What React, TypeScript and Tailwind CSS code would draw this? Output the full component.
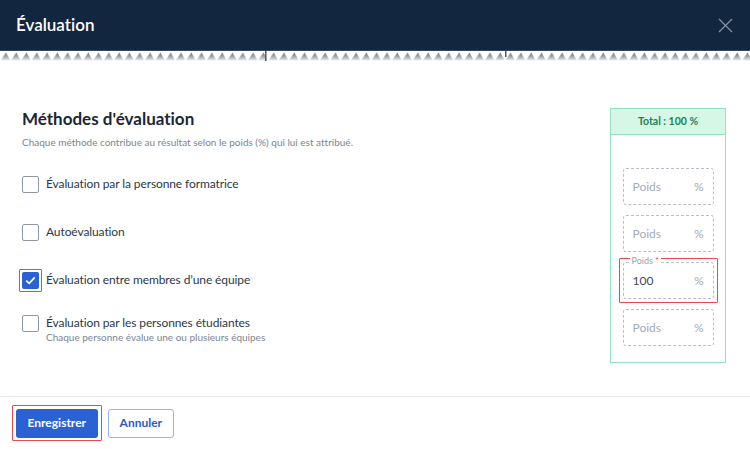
import React from "react"

const font = { fontFamily: "Lato, 'Open Sans', sans-serif" }

const methods = [
  { label: "Évaluation par la personne formatrice", checked: false },
  { label: "Autoévaluation", checked: false },
  { label: "Évaluation entre membres d’une équipe", checked: true },
  {
    label: "Évaluation par les personnes étudiantes",
    hint: "Chaque personne évalue une ou plusieurs équipes",
    checked: false,
  },
]

const TornEdge = () => (
  <svg width="750" height="10" className="block">
    <defs>
      <linearGradient id="tooth" x1="0" y1="0" x2="0" y2="1">
        <stop offset="0" stopColor="#6c7178" />
        <stop offset="0.55" stopColor="#a7abb0" />
        <stop offset="1" stopColor="#eceef0" />
      </linearGradient>
      <pattern id="teeth" width="10.3" height="10" patternUnits="userSpaceOnUse">
        <path d="M0.5 9.5 L6 1.5 L10.3 9.5 Z" fill="url(#tooth)" />
      </pattern>
    </defs>
    <rect width="750" height="10" fill="url(#teeth)" />
    <rect x="265" y="0" width="1.5" height="10" fill="#4b5b70" />
    <rect x="505" y="0" width="1.5" height="6" fill="#4b5b70" />
  </svg>
)

// red focus frame drawn around the focused control
const Focus = ({ on, children, className = "" }: { on?: boolean; children: React.ReactNode; className?: string }) => (
  <div
    className={
      "flex shrink-0 items-center justify-center rounded-[1px] border-[1.5px] " +
      (on ? "border-[#e5484d] " : "border-transparent ") +
      className
    }
  >
    {children}
  </div>
)

const Check = ({ checked }: { checked: boolean }) =>
  checked ? (
    <Focus on className="-m-[4px] p-[2px]">
      <span className="flex h-[17px] w-[17px] items-center justify-center rounded-[2px] bg-[#2a62d4]">
        <svg width="11" height="9" viewBox="0 0 11 9">
          <path d="M1.2 4.6 L4.2 7.4 L9.8 1.4" fill="none" stroke="#fff" strokeWidth="1.6" />
        </svg>
      </span>
    </Focus>
  ) : (
    <span className="block h-[17px] w-[17px] shrink-0 rounded-[2px] border border-[#8d97a5] bg-white" />
  )

const WeightInput = ({ value, active }: { value?: string; active?: boolean }) => (
  <Focus on={active} className="p-[3px]">
    <div className="relative flex h-[37px] w-[91px] items-center justify-between rounded-[3px] border border-dashed border-[#b7bfca] px-[9px] text-[12px]">
      {active && (
        <span className="absolute -top-[7px] left-[6px] bg-white px-[2px] text-[9px] leading-none text-[#98a1ae]">
          Poids <span className="text-[#e5484d]">*</span>
        </span>
      )}
      <span className={value ? "text-[#3b4a5e]" : "text-[#a3abb7]"}>{value ?? "Poids"}</span>
      <span className="text-[#a3abb7]">%</span>
    </div>
  </Focus>
)

export default function App() {
  return (
    <div
      style={font}
      className="flex h-[449px] w-[750px] flex-col overflow-hidden bg-white [font-variant-ligatures:none]"
    >
      <header className="flex h-[51px] items-center justify-between border-b border-[#33475f] bg-[#13263f] pl-[16px] pr-[17px]">
        <h1 className="text-[17px] font-semibold text-white">Évaluation</h1>
        <svg width="15" height="15" viewBox="0 0 15 15">
          <path d="M1 1 L14 14 M14 1 L1 14" stroke="#8593a6" strokeWidth="1.2" />
        </svg>
      </header>
      <TornEdge />

      <main className="flex flex-1 justify-between pl-[22px] pr-[24px] pt-[47px]">
        <section>
          <h2 className="text-[17px] font-bold leading-[22px] text-[#1b2636]">Méthodes d'évaluation</h2>
          <p className="mt-[5px] text-[10px] leading-[14px] text-[#7b8592]">
            Chaque méthode contribue au résultat selon le poids (%) qui lui est attribué.
          </p>
          <ul className="mt-[26px] flex flex-col">
            {methods.map((m, i) => (
              <li
                key={m.label}
                className={"flex items-start gap-[7px] " + (i === 0 ? "" : i === 3 ? "mt-[25px]" : "mt-[30px]")}
              >
                <div className="flex h-[18px] w-[17px] items-center justify-center">
                  <Check checked={m.checked} />
                </div>
                <div>
                  <div className="text-[12px] leading-[18px] tracking-[-0.1px] text-[#2c3848]">{m.label}</div>
                  {m.hint && <div className="text-[10px] leading-[11px] text-[#7b8592]">{m.hint}</div>}
                </div>
              </li>
            ))}
          </ul>
        </section>

        <aside className="mb-[33px] flex w-[116px] flex-col border border-[#93e2c4]">
          <div className="flex h-[26px] items-center justify-center border-b border-[#93e2c4] bg-[#d6f6e6] text-[10.5px] font-bold text-[#1b8357]">
            Total : 100 %
          </div>
          <div className="flex flex-col items-center gap-[2px] pt-[29px]">
            <WeightInput />
            <WeightInput />
            <WeightInput value="100" active />
            <WeightInput />
          </div>
        </aside>
      </main>

      <footer className="flex h-[53px] items-center gap-[6px] border-t border-[#e3e8ee] pl-[12px]">
        <Focus on className="p-[2.5px]">
          <button className="h-[29px] rounded-[3px] bg-[#2a62d4] px-[12px] text-[12px] font-bold text-white">
            Enregistrer
          </button>
        </Focus>
        <button className="h-[29px] rounded-[3px] border border-[#9ab3e6] bg-white px-[11px] text-[12px] font-bold text-[#2a5cc4]">
          Annuler
        </button>
      </footer>
    </div>
  )
}
